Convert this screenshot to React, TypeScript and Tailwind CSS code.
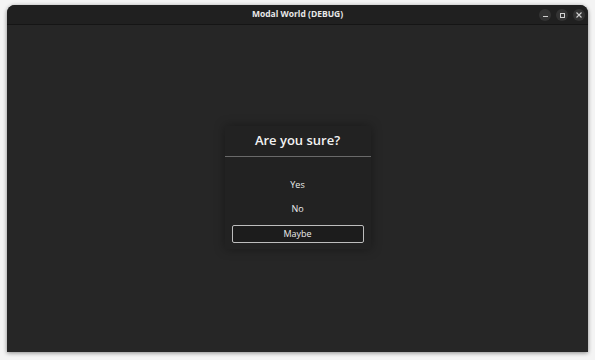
import React from "react";

export default function App() {
  return (
    <div className="w-[595px] h-[360px] bg-[#f4f4f4] pt-[5px] pl-[7px]" style={{ fontFamily: '"Open Sans", "Noto Sans", sans-serif' }}>
      <div className="w-[581px] h-[347px] flex flex-col rounded-t-[8px] overflow-hidden shadow-[0_1px_4px_rgba(0,0,0,0.45)] bg-[#262626]">
        <div className="h-[20px] shrink-0 bg-[#202020] border-b border-[#151515] flex items-center relative">
          <div className="flex-1 text-center text-[8.5px] font-bold text-[#e8e8e8] leading-none">Modal World (DEBUG)</div>
          <div className="absolute right-[3px] top-[4px] flex gap-[5px]">
            <div className="w-[12px] h-[12px] rounded-full bg-[#333333] flex items-center justify-center">
              <div className="w-[5px] h-[1px] bg-[#d0d0d0] mt-[2px]" />
            </div>
            <div className="w-[12px] h-[12px] rounded-full bg-[#333333] flex items-center justify-center">
              <div className="w-[5px] h-[5px] border border-[#d0d0d0]" />
            </div>
            <div className="w-[12px] h-[12px] rounded-full bg-[#333333] flex items-center justify-center">
              <svg width="6" height="6" viewBox="0 0 6 6"><path d="M0.5 0.5L5.5 5.5M5.5 0.5L0.5 5.5" stroke="#d0d0d0" strokeWidth="1.1" /></svg>
            </div>
          </div>
        </div>
        <div className="flex-1 flex items-center justify-center">
          <div className="w-[146px] bg-[#222222] shadow-[0_0_10px_rgba(0,0,0,0.35)] flex flex-col pt-[3px] pb-[6px] mt-[-3px]">
            <div className="h-[24px] flex items-center justify-center text-[13px] font-semibold text-[#f2f2f2]">Are you sure?</div>
            <div className="h-[1px] bg-[#6a6a6a] mt-[3px]" />
            <div className="flex flex-col items-center px-[7px] pt-[20px] gap-[7px]">
              <div className="w-full h-[17px] flex items-center justify-center text-[9px] font-medium text-[#ececec]">Yes</div>
              <div className="w-full h-[17px] flex items-center justify-center text-[9px] font-medium text-[#ececec]">No</div>
              <div className="w-full h-[18px] flex items-center justify-center text-[9px] font-medium text-[#ececec] border border-[#bdbdbd] rounded-[2px] bg-[#1c1c1c]">Maybe</div>
            </div>
          </div>
        </div>
      </div>
    </div>
  );
}
